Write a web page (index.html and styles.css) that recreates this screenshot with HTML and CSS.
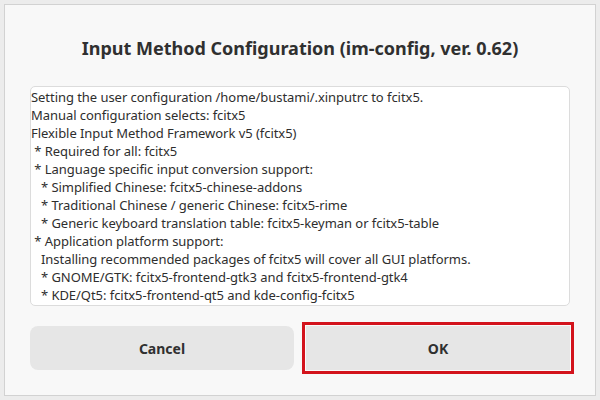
FILE: index.html
```html
<!DOCTYPE html>
<html lang="en">
<head>
    <meta charset="UTF-8">
    <meta name="viewport" content="width=device-width, initial-scale=1.0">
    <title>im-config</title>
    <link rel="stylesheet" href="styles.css">
</head>

<body>
    <div class="window">
        <h2 class="title">Input Method Configuration (im-config, ver. 0.62)</h2>

        <div class="message">
            <div class="line">Setting the user configuration /home/bustami/.xinputrc to fcitx5.</div>
            <div class="line">Manual configuration selects: fcitx5</div>
            <div class="line">Flexible Input Method Framework v5 (fcitx5)</div>
            <div class="line">&nbsp;* Required for all: fcitx5</div>
            <div class="line">&nbsp;* Language specific input conversion support:</div>
            <div class="line">&nbsp;&nbsp;&nbsp;* Simplified Chinese: fcitx5-chinese-addons</div>
            <div class="line">&nbsp;&nbsp;&nbsp;* Traditional Chinese / generic Chinese: fcitx5-rime</div>
            <div class="line">&nbsp;&nbsp;&nbsp;* Generic keyboard translation table: fcitx5-keyman or fcitx5-table</div>
            <div class="line">&nbsp;* Application platform support:</div>
            <div class="line">&nbsp;&nbsp;&nbsp;Installing recommended packages of fcitx5 will cover all GUI platforms.</div>
            <div class="line">&nbsp;&nbsp;&nbsp;* GNOME/GTK: fcitx5-frontend-gtk3 and fcitx5-frontend-gtk4</div>
            <div class="line">&nbsp;&nbsp;&nbsp;* KDE/Qt5: fcitx5-frontend-qt5 and kde-config-fcitx5</div>
        </div>

        <div class="buttons">
            <div class="btn">Cancel</div>
            <div class="btn focused">OK</div>
        </div>
    </div>
</body>

</html>
```

FILE: styles.css
```css
html {
    background-color: #ececec;
}

body {
    margin: 0;
    font-family: "Noto Sans", "DejaVu Sans", sans-serif;
    color: #2e2e2e;
}

.window {
    box-sizing: border-box;
    width: 592px;
    height: 392px;
    margin: 4px;
    padding: 0 25px;
    border: 1px solid #d2d2d2;
    background-color: #f8f8f8;
    display: flex;
    flex-direction: column;
}

.title {
    margin: 31px 0 26px;
    font-size: 18px;
    line-height: 24px;
    font-weight: bold;
    text-align: center;
    color: #303030;
}

.message {
    height: 220px;
    box-sizing: border-box;
    padding: 1px 0 0 0;
    border: 1px solid #dcdcdc;
    border-radius: 5px;
    background-color: #fff;
    font-size: 13px;
    line-height: 18px;
    letter-spacing: -0.05px;
    white-space: nowrap;
    overflow: hidden;
}

.buttons {
    display: grid;
    grid-template-columns: 1fr 1fr;
    grid-gap: 12px;
    margin-top: 20px;
}

.btn {
    height: 44px;
    display: flex;
    align-items: center;
    justify-content: center;
    border-radius: 8px;
    background-color: #e6e6e6;
    font-size: 14px;
    font-weight: bold;
    color: #303030;
}

.btn.focused {
    border-radius: 0;
    box-shadow: 0 0 0 1px #fafafa, 0 0 0 4px #d3131c;
}
```
